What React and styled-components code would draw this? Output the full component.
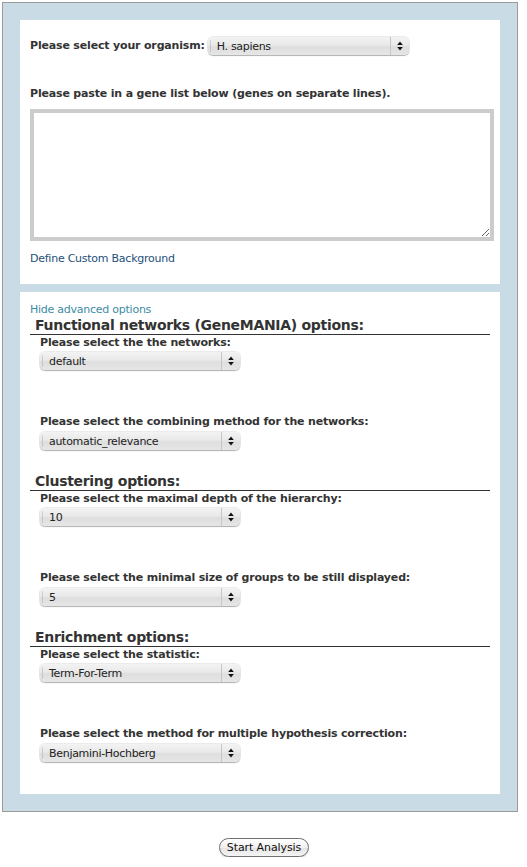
import React from "react";
import styled, { createGlobalStyle } from "styled-components";

const Global = createGlobalStyle`
  html, body { margin: 0; padding: 0; background: #fff; }
  body { font-family: "DejaVu Sans", Verdana, sans-serif; color: #333; }
`;

const Page = styled.div`
  width: 527px;
  padding: 2px 0 0 2px;
  box-sizing: border-box;
`;

const Frame = styled.div`
  width: 516px;
  box-sizing: border-box;
  border: 1px solid #9a9a9a;
  background: #c9dbe4;
  padding: 17px;
  display: flex;
  flex-direction: column;
  gap: 8px;
`;

const Panel = styled.div`
  background: #fff;
  padding: ${(p) => p.$pad};
  min-height: ${(p) => p.$h}px;
  box-sizing: border-box;
`;

const Row = styled.div`
  display: flex;
  align-items: center;
  gap: 3px;
`;

const Label = styled.div`
  font-size: 11px;
  font-weight: bold;
  line-height: 14px;
  letter-spacing: -0.17px;
  color: #333;
  white-space: nowrap;
`;

const Prompt = styled(Label)`
  margin-top: ${(p) => p.$mt || 0}px;
`;

const GeneArea = styled.textarea`
  display: block;
  width: 464px;
  height: 132px;
  box-sizing: border-box;
  margin-top: 8px;
  border: 4px solid #cccccc;
  padding: 2px;
  outline: none;
  resize: both;
  font-family: "DejaVu Sans", sans-serif;
  font-size: 11px;
`;

const Link = styled.a`
  display: block;
  font-size: 11px;
  letter-spacing: -0.25px;
  line-height: 14px;
  color: ${(p) => p.$color};
  text-decoration: none;
  margin-top: ${(p) => p.$mt || 0}px;
  cursor: pointer;
`;

const Section = styled.div`
  margin-top: ${(p) => p.$mt}px;
`;

const Heading = styled.div`
  font-size: 14px;
  font-weight: bold;
  letter-spacing: -0.3px;
  line-height: 17px;
  color: #333;
  padding-left: 5px;
  border-bottom: 1px solid #333;
`;

const Field = styled.div`
  padding-left: 10px;
  margin-top: ${(p) => p.$mt}px;
`;

const SelectBox = styled.div`
  display: flex;
  align-items: stretch;
  width: ${(p) => p.$w}px;
  height: 18px;
  margin-top: ${(p) => p.$mt || 0}px;
  box-sizing: border-box;
  border-radius: 5px;
  background: linear-gradient(to bottom, #f3f3f3 0%, #e9e9e9 45%, #dedede 55%, #e6e6e6 100%);
  box-shadow: 0 0 0 1px rgba(0, 0, 0, 0.08), 0 1px 1px rgba(0, 0, 0, 0.25);
  cursor: default;
`;

const SelectValue = styled.div`
  flex: 1;
  display: flex;
  align-items: center;
  padding-left: 9px;
  font-size: 11px;
  letter-spacing: -0.3px;
  color: #222;
  position: relative;
  &::before {
    content: "";
    position: absolute;
    left: 2px;
    top: 3px;
    bottom: 3px;
    width: 1px;
    background: rgba(0, 0, 0, 0.12);
  }
`;

const SelectArrows = styled.div`
  width: 18px;
  display: flex;
  align-items: center;
  justify-content: center;
  border-left: 1px solid #c6c6c6;
`;

const Arrows = () => (
  <svg width="6" height="10" viewBox="0 0 6 10">
    <path d="M3 0.5 L5.8 4 L0.2 4 Z" fill="#111" />
    <path d="M3 9.5 L5.8 6 L0.2 6 Z" fill="#111" />
  </svg>
);

const Select = ({ value, w = 200, mt }) => (
  <SelectBox $w={w} $mt={mt}>
    <SelectValue>{value}</SelectValue>
    <SelectArrows>
      <Arrows />
    </SelectArrows>
  </SelectBox>
);

const Footer = styled.div`
  display: flex;
  justify-content: center;
  padding: 26px 0 0 0;
  width: 524px;
`;

const Button = styled.button`
  height: 19px;
  padding: 0 7px;
  border: 1px solid #6f6f6f;
  border-radius: 10px;
  background: linear-gradient(to bottom, #ffffff 0%, #f1f1f1 50%, #e4e4e4 51%, #f4f4f4 100%);
  font-family: "DejaVu Sans", sans-serif;
  font-size: 11px;
  letter-spacing: -0.1px;
  color: #111;
  line-height: 16px;
  box-shadow: 0 1px 1px rgba(0, 0, 0, 0.15);
`;

const SelectField = ({ label, value, mt, first }) => (
  <Field $mt={mt}>
    <Label>{label}</Label>
    <Select value={value} mt={first ? 2 : 3} />
  </Field>
);

const OptionSection = ({ title, fields, mt }) => (
  <Section $mt={mt}>
    <Heading>{title}</Heading>
    {fields.map((f, i) => (
      <SelectField
        key={f.label}
        label={f.label}
        value={f.value}
        first={i === 0}
        mt={i === 0 ? 1 : 45}
      />
    ))}
  </Section>
);

const sections = [
  {
    title: "Functional networks (GeneMANIA) options:",
    fields: [
      { label: "Please select the the networks:", value: "default" },
      { label: "Please select the combining method for the networks:", value: "automatic_relevance" },
    ],
  },
  {
    title: "Clustering options:",
    fields: [
      { label: "Please select the maximal depth of the hierarchy:", value: "10" },
      { label: "Please select the minimal size of groups to be still displayed:", value: "5" },
    ],
  },
  {
    title: "Enrichment options:",
    fields: [
      { label: "Please select the statistic:", value: "Term-For-Term" },
      { label: "Please select the method for multiple hypothesis correction:", value: "Benjamini-Hochberg" },
    ],
  },
];

export default function App() {
  return (
    <Page>
      <Global />
      <Frame>
        <Panel $pad="17px 10px 0 10px" $h={264}>
          <Row>
            <Label>Please select your organism:</Label>
            <Select value="H. sapiens" w={201} />
          </Row>
          <Prompt $mt={32}>Please paste in a gene list below (genes on separate lines).</Prompt>
          <GeneArea />
          <Link $color="#1d4f78" $mt={11}>Define Custom Background</Link>
        </Panel>
        <Panel $pad="11px 10px 0 10px" $h={502}>
          <Link $color="#3a8ca3">Hide advanced options</Link>
          {sections.map((s, i) => (
            <OptionSection key={s.title} title={s.title} fields={s.fields} mt={i === 0 ? 0 : 23} />
          ))}
        </Panel>
      </Frame>
      <Footer>
        <Button>Start Analysis</Button>
      </Footer>
    </Page>
  );
}
